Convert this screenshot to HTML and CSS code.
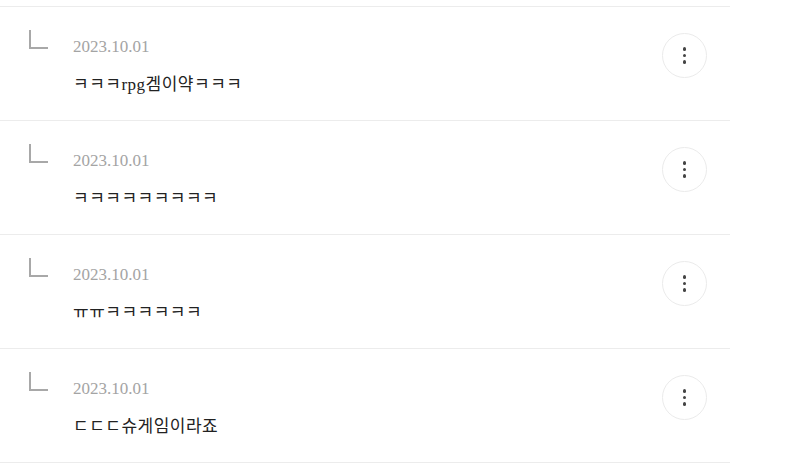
FILE: index.html
```html
<!DOCTYPE html>
<html lang="ko">
<head>
  <meta charset="UTF-8">
  <title>Replies</title>
  <link rel="stylesheet" href="styles.css">
</head>
<body>

  <ul class="replies">
    <li class="reply">
      <span class="reply-mark"></span>
      <div class="reply-body">
        <div class="reply-date">2023.10.01</div>
        <div class="reply-text">ㅋㅋㅋrpg겜이약ㅋㅋㅋ</div>
      </div>
      <button class="more-btn"><span></span><span></span><span></span></button>
    </li>
    <li class="reply">
      <span class="reply-mark"></span>
      <div class="reply-body">
        <div class="reply-date">2023.10.01</div>
        <div class="reply-text">ㅋㅋㅋㅋㅋㅋㅋㅋㅋ</div>
      </div>
      <button class="more-btn"><span></span><span></span><span></span></button>
    </li>
    <li class="reply">
      <span class="reply-mark"></span>
      <div class="reply-body">
        <div class="reply-date">2023.10.01</div>
        <div class="reply-text">ㅠㅠㅋㅋㅋㅋㅋㅋ</div>
      </div>
      <button class="more-btn"><span></span><span></span><span></span></button>
    </li>
    <li class="reply">
      <span class="reply-mark"></span>
      <div class="reply-body">
        <div class="reply-date">2023.10.01</div>
        <div class="reply-text">ㄷㄷㄷ슈게임이라죠</div>
      </div>
      <button class="more-btn"><span></span><span></span><span></span></button>
    </li>
  </ul>

</body>
</html>
```

FILE: styles.css
```css
body {
  margin: 0;
  background-color: #fff;
  font-family: 'Liberation Serif', 'Noto Sans CJK KR', serif;
}
.replies {
  list-style: none;
  margin: 6px 0 0;
  padding: 0;
  width: 730px;
  border-bottom: 1px solid #ececec;
}
.reply {
  display: flex;
  align-items: flex-start;
  height: 113px;
  box-sizing: content-box;
  padding: 0 23px 0 29px;
  border-top: 1px solid #ececec;
}
.reply-mark {
  flex: none;
  width: 17px;
  height: 17px;
  margin-top: 23px;
  border-left: 2px solid #a8a8a8;
  border-bottom: 2px solid #a8a8a8;
}
.reply-body {
  flex: 1;
  margin-left: 25px;
  padding-top: 30px;
}
.reply-date {
  font-size: 17px;
  line-height: 20px;
  color: #a4a4a4;
}
.reply-text {
  margin-top: 18px;
  font-size: 17px;
  line-height: 20px;
  color: #222;
  letter-spacing: 0.5px;
}
.more-btn {
  flex: none;
  display: flex;
  flex-direction: column;
  align-items: center;
  justify-content: center;
  gap: 3px;
  width: 45px;
  height: 45px;
  margin-top: 26px;
  padding: 0;
  border: 1px solid #ebebeb;
  border-radius: 50%;
  background-color: #fff;
  cursor: pointer;
}
.more-btn span {
  display: block;
  width: 3.5px;
  height: 3.5px;
  border-radius: 50%;
  background-color: #444;
}
```
